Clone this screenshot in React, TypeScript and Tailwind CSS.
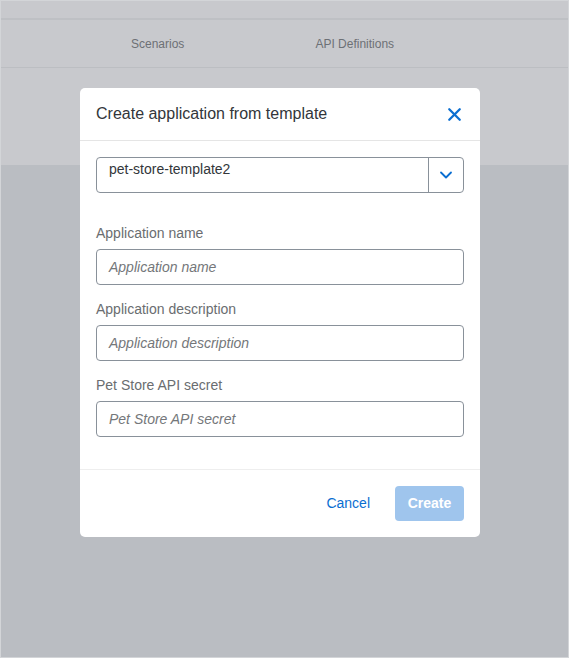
import { ChevronDown, X } from 'lucide-react'

// Fields shown in the template form
const fields = ['Application name', 'Application description', 'Pet Store API secret']

function App() {
  return (
    <div
      className="relative w-[569px] h-[658px] overflow-hidden border border-[#d3d5d8] bg-[#babdc2] flex flex-col"
      style={{ fontFamily: '"Liberation Sans", Arial, sans-serif' }}
    >
      {/* Page behind the dialog (already dimmed) */}
      <div className="h-[19px] bg-[#c8c9cd] border-b-2 border-[#bec0c4]" />
      <div className="h-[48px] bg-[#c8c9cd] border-b border-[#bcbec2] flex items-center text-[12px] text-[#6d7075]">
        <span className="ml-[130px]">Scenarios</span>
        <span className="ml-[131px]">API Definitions</span>
      </div>
      <div className="h-[97px] bg-[#c8c9cd]" />
      <div className="flex-1" />

      {/* Dialog */}
      <div className="absolute left-[79px] top-[87px] w-[400px] bg-white rounded-[5px] flex flex-col">
        <div className="h-[53px] px-4 flex items-center justify-between border-b border-[#e5e5e5]">
          <h2 className="text-[16px] text-[#32363a]">Create application from template</h2>
          <button className="text-[#0a6ed1] -mr-[1px]" aria-label="Close">
            <X size={21} strokeWidth={2.6} />
          </button>
        </div>

        <div className="px-4 pt-4 pb-8 flex flex-col">
          <div className="h-[36px] flex border border-[#89919a] rounded-[4px] overflow-hidden">
            <div className="flex-1 px-3 pt-[1px] text-[14px] text-[#32363a]">pet-store-template2</div>
            <div className="w-[35px] border-l border-[#89919a] flex items-center justify-center text-[#0a6ed1]">
              <ChevronDown size={20} strokeWidth={2.2} />
            </div>
          </div>

          <div className="mt-[32px] flex flex-col gap-[16px]">
            {fields.map((f) => (
              <div key={f} className="flex flex-col">
                <label className="text-[14px] text-[#6a6d70] leading-[16px] mb-[8px]">{f}</label>
                <div className="h-[36px] border border-[#89919a] rounded-[4px] px-3 flex items-center text-[14px] italic text-[#74777a]">
                  {f}
                </div>
              </div>
            ))}
          </div>
        </div>

        <div className="h-[68px] border-t border-[#eeeeee] px-4 flex items-center justify-end gap-[25px]">
          <button className="text-[14px] text-[#0a6ed1]">Cancel</button>
          <button className="h-[35px] w-[69px] rounded-[4px] bg-[#9fc5ed] text-white text-[14px] font-bold">
            Create
          </button>
        </div>
      </div>
    </div>
  )
}

export default App
